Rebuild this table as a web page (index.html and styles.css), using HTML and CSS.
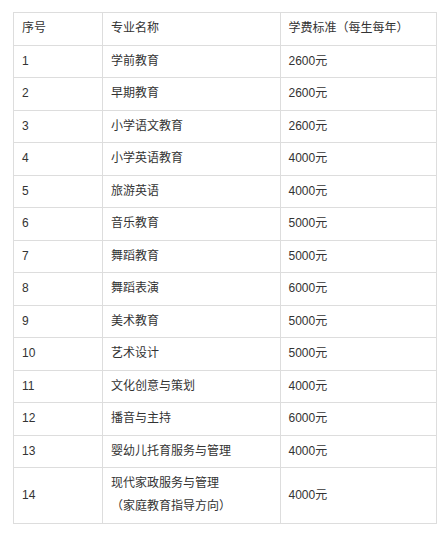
FILE: index.html
```html
<!DOCTYPE html>
<html lang="zh-CN">
<head>
<meta charset="utf-8">
<title>学费标准</title>
<link rel="stylesheet" href="styles.css">
</head>
<body>
<div class="wrap">
<table class="fees">
<colgroup><col class="c1"><col class="c2"><col class="c3"></colgroup>
<tr><td>序号</td><td>专业名称</td><td>学费标准（每生每年）</td></tr>
<tr><td>1</td><td>学前教育</td><td>2600元</td></tr>
<tr><td>2</td><td>早期教育</td><td>2600元</td></tr>
<tr><td>3</td><td>小学语文教育</td><td>2600元</td></tr>
<tr><td>4</td><td>小学英语教育</td><td>4000元</td></tr>
<tr><td>5</td><td>旅游英语</td><td>4000元</td></tr>
<tr><td>6</td><td>音乐教育</td><td>5000元</td></tr>
<tr><td>7</td><td>舞蹈教育</td><td>5000元</td></tr>
<tr><td>8</td><td>舞蹈表演</td><td>6000元</td></tr>
<tr><td>9</td><td>美术教育</td><td>5000元</td></tr>
<tr><td>10</td><td>艺术设计</td><td>5000元</td></tr>
<tr><td>11</td><td>文化创意与策划</td><td>4000元</td></tr>
<tr><td>12</td><td>播音与主持</td><td>6000元</td></tr>
<tr><td>13</td><td>婴幼儿托育服务与管理</td><td>4000元</td></tr>
<tr><td>14</td><td>现代家政服务与管理<br>（家庭教育指导方向）</td><td>4000元</td></tr>
</table>
</div>
</body>
</html>
```
FILE: styles.css
```css
html, body {
  margin: 0;
  padding: 0;
  background: #fff;
}
.wrap {
  padding: 12px 0 0 13px;
}
.fees {
  border-collapse: collapse;
  width: 423px;
  table-layout: fixed;
  font-family: "Liberation Sans", "Noto Sans CJK SC", sans-serif;
  font-size: 12px;
  line-height: 23px;
  color: #333;
}
.c1 { width: 89px; }
.c2 { width: 177.5px; }
.c3 { width: 156.5px; }
.fees td {
  border: 1px solid #ddd;
  padding: 4.25px 8px;
  vertical-align: middle;
  text-align: left;
}
```
